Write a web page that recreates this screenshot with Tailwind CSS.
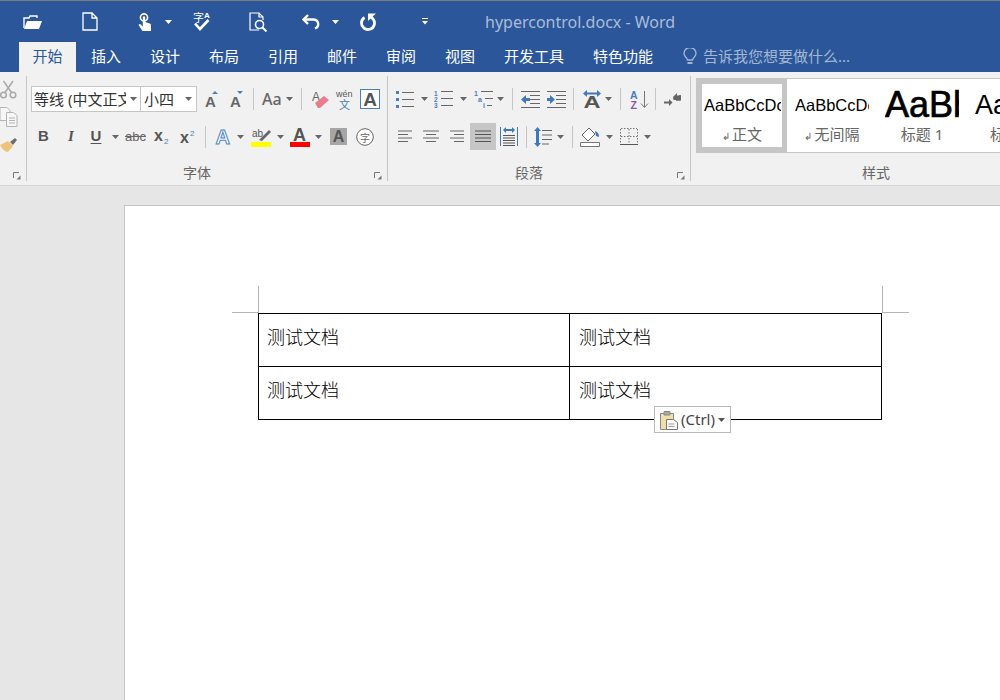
<!DOCTYPE html>
<html lang="zh-CN">

<head>
    <meta charset="UTF-8">
    <script src="https://cdn.jsdelivr.net/npm/@tailwindcss/browser@4"></script>
    <title>hypercontrol.docx - Word</title>
</head>

<body class="w-[1000px] h-[700px] overflow-hidden flex flex-col bg-[#e6e6e6] font-['Noto_Sans','Noto_Sans_CJK_SC',sans-serif]">

    <!-- Title bar -->
    <div class="h-[42px] shrink-0 bg-[#2b579a] border-t border-[#7d7d7d] flex items-center text-white relative">
        <svg class="ml-[23px] shrink-0" width="19" height="16" viewBox="0 0 19 16"><path d="M1 14V4h5l1-2h7v2" fill="none" stroke="#fff" stroke-width="1.400"/><path d="M1 15l3-8h15l-3 8z" fill="#fff"/></svg>
        <svg class="ml-[40px] shrink-0" width="16" height="19" viewBox="0 0 16 19"><path d="M1 1h9l5 5v12H1z M10 1v5h5" fill="none" stroke="#fff" stroke-width="1.300"/></svg>
        <svg class="ml-[40px] shrink-0" width="14" height="18" viewBox="0 0 14 18"><circle cx="6" cy="4.500" r="3.600" fill="none" stroke="#fff" stroke-width="1.600"/><path d="M4.800 4.500a1.200 1.200 0 0 1 2.400 0v4.500l4.500 1.500c1 .4 1.300 1 1.300 2V18H4.500L.8 12.500c-.6-1 .7-2 1.600-1.200L4.800 13.500z" fill="#fff"/></svg>
        <svg class="ml-[13px] shrink-0" width="7" height="4"><path d="M0 0h7L3.500 4z" fill="#fff"/></svg>
        <svg class="ml-[21px] shrink-0 overflow-visible" width="19" height="21" viewBox="0 0 19 21"><text x="0" y="11" font-size="11" font-family="Noto Sans CJK SC" fill="#fff">字</text><text x="11" y="7" font-size="8" font-weight="700" font-family="Liberation Sans" fill="#fff">A</text><path d="M2 12.500l5 5.500 8.500-9" fill="none" stroke="#fff" stroke-width="2.600"/></svg>
        <svg class="ml-[37px] shrink-0" width="19" height="20" viewBox="0 0 19 20"><path d="M10 18H1V1h9l4 4v3 M10 1v4h4" fill="none" stroke="#fff" stroke-width="1.200"/><circle cx="10.500" cy="12.500" r="4" fill="none" stroke="#fff" stroke-width="1.600"/><path d="M13.500 15.500l4 4" stroke="#fff" stroke-width="2"/></svg>
        <svg class="ml-[34px] shrink-0" width="19" height="16" viewBox="0 0 19 16"><path d="M6 1L1.500 5.500 6 10" fill="none" stroke="#fff" stroke-width="2.400"/><path d="M2 5.500h9c6 0 7 7 2 9" fill="none" stroke="#fff" stroke-width="2.400"/></svg>
        <svg class="ml-[11px] shrink-0" width="7" height="4"><path d="M0 0h7L3.500 4z" fill="#fff"/></svg>
        <svg class="ml-[20px] shrink-0" width="18" height="18" viewBox="0 0 18 18"><path d="M5.500 4.500A6.500 6.500 0 1 0 9 3.500" fill="none" stroke="#fff" stroke-width="2.800"/><path d="M9 .5h8L9 8z" fill="#fff"/></svg>
        <svg class="ml-[45px] shrink-0" width="6" height="7" viewBox="0 0 6 7"><path d="M0 .5h6" stroke="#fff"/><path d="M0 3h6L3 6.500z" fill="#fff"/></svg>
        <span class="ml-[57px] text-[16px] text-[#a9bcd8] whitespace-nowrap">hypercontrol.docx - Word</span>
    </div>

    <!-- Tabs -->
    <div class="h-[30px] shrink-0 bg-[#2b579a] flex items-stretch pl-[19px] gap-[3px] text-[15px] text-white whitespace-nowrap">
        <div class="w-[57px] bg-[#f1f1f1] text-[#2b579a] flex items-center justify-center pb-[2px]">开始</div>
        <div class="w-[56px] -ml-px flex items-center justify-center pb-[2px]">插入</div>
        <div class="w-[56px] flex items-center justify-center pb-[2px]">设计</div>
        <div class="w-[56px] flex items-center justify-center pb-[2px]">布局</div>
        <div class="w-[56px] flex items-center justify-center pb-[2px]">引用</div>
        <div class="w-[56px] flex items-center justify-center pb-[2px]">邮件</div>
        <div class="w-[56px] flex items-center justify-center pb-[2px]">审阅</div>
        <div class="w-[56px] flex items-center justify-center pb-[2px]">视图</div>
        <div class="w-[86px] flex items-center justify-center pb-[2px]">开发工具</div>
        <div class="w-[86px] flex items-center justify-center pb-[2px]">特色功能</div>
        <div class="flex items-center ml-[14px] text-[#a3b7d3] pb-[1px]">
            <svg width="14" height="18" viewBox="0 0 14 18" class="shrink-0"><path d="M4.500 12C4 9.500 1 8.500 1 5.500a6 6 0 0 1 12 0c0 3-3 4-3.500 6.500z" fill="none" stroke="#a3b7d3" stroke-width="1.300"/><path d="M4.500 14h5v2h-5z" fill="#a3b7d3"/></svg>
            <span class="ml-[6px]">告诉我您想要做什么...</span>
        </div>
    </div>

    <!-- Ribbon -->
    <div class="h-[114px] shrink-0 bg-[#f1f1f1] border-b border-[#d4d4d4] flex">

        <!-- Clipboard -->
        <div class="w-[26px] shrink-0 flex flex-col relative overflow-hidden">
            <svg class="mt-[8px]" width="17" height="19" viewBox="0 0 17 19"><g fill="none" stroke="#aaa" stroke-width="1.500"><circle cx="3.500" cy="15" r="2.800"/><circle cx="13" cy="15" r="2.800"/><path d="M5 12.500L13 1M11.500 12.500L3.500 1"/></g></svg>
            <svg class="mt-[8px]" width="18" height="20" viewBox="0 0 18 20"><g fill="#f6f6f6" stroke="#b4b4b4"><path d="M0 .5h7l3 3v10H0z"/><path d="M6.500 5.500h7l3.500 3v11H6.500z"/></g><path d="M9 11h6M9 13.500h6M9 16h6" stroke="#b4b4b4"/></svg>
            <svg class="mt-[10px]" width="18" height="16" viewBox="0 0 18 16"><path d="M10 5l5-4 2 2-4 5z" fill="#6e6e6e"/><path d="M0 8l8-4 5 5-5 6C5 15 2 12 0 8z" fill="#efc27c"/></svg>
            <svg class="absolute left-[13px] top-[100px]" width="8" height="8" viewBox="0 0 8 8"><path d="M.5 6V.5H6" fill="none" stroke="#777"/><path d="M7.500 7.500H3.500l4-4z" fill="#777"/></svg>
        </div>
        <div class="w-px my-[4px] bg-[#c6c6c6] shrink-0"></div>

        <!-- Font group -->
        <div class="w-[360px] shrink-0 flex flex-col relative pt-[14px]">
            <div class="h-[26px] flex items-center">
                <div class="ml-[4px] w-[110px] h-[26px] bg-white border border-[#c6c6c6] flex items-center text-[15px] text-[#333] shrink-0">
                    <span class="w-[92px] ml-[2px] overflow-hidden whitespace-nowrap">等线 (中文正文</span>
                    <svg class="ml-[4px]" width="7" height="4"><path d="M0 0h7L3.500 4z" fill="#666"/></svg>
                </div>
                <div class="w-[56px] h-[26px] bg-white border border-l-0 border-[#c6c6c6] flex items-center text-[15px] text-[#333] shrink-0">
                    <span class="w-[40px] ml-[3px] whitespace-nowrap">小四</span>
                    <svg class="ml-[1px]" width="7" height="4"><path d="M0 0h7L3.500 4z" fill="#666"/></svg>
                </div>
                <svg class="ml-[8px] shrink-0 overflow-visible" width="14" height="16" viewBox="0 0 14 16"><text x="0" y="15.500" font-size="15" font-family="Liberation Sans" font-weight="700" fill="#666">A</text><path d="M7 3l3-3 3 3z" fill="#4a7dbb"/></svg>
                <svg class="ml-[11px] shrink-0 overflow-visible" width="14" height="16" viewBox="0 0 14 16"><text x="0" y="15.500" font-size="15" font-family="Liberation Sans" font-weight="700" fill="#666">A</text><path d="M7 0h6l-3 3z" fill="#4a7dbb"/></svg>
                <div class="ml-[9px] w-px h-[22px] bg-[#c6c6c6] shrink-0"></div>
                <span class="ml-[8px] text-[16px] font-medium text-[#666] leading-none w-[20px] shrink-0 whitespace-nowrap">Aa</span>
                <svg class="ml-[4px] shrink-0" width="7" height="4"><path d="M0 0h7L3.500 4z" fill="#666"/></svg>
                <div class="ml-[8px] w-px h-[22px] bg-[#c6c6c6] shrink-0"></div>
                <svg class="ml-[10px] shrink-0 overflow-visible" width="18" height="20" viewBox="0 0 18 20"><text x="0" y="12" font-size="12" font-family="Liberation Sans" fill="#666">A</text><path d="M3 14l9-7 5 4-9 8H6z" fill="#e97d8e"/></svg>
                <svg class="ml-[6px] shrink-0 overflow-visible" width="17" height="21" viewBox="0 0 17 21"><text x="0" y="8" font-size="9" font-family="Liberation Sans" fill="#555">wén</text><text x="3" y="20" font-size="11" font-family="Noto Sans CJK SC" fill="#4a7dbb">文</text></svg>
                <div class="ml-[7px] w-[20px] h-[20px] border border-[#4a7dbb] bg-white flex items-center justify-center text-[19px] font-bold leading-none text-[#555] font-['Liberation_Sans'] shrink-0">A</div>
            </div>
            <div class="h-[27px] mt-[11px] flex items-center text-[#555]">
                <span class="ml-[11px] w-[10px] text-[15px] font-bold font-['Liberation_Sans'] text-center shrink-0">B</span>
                <span class="ml-[18px] w-[10px] text-[15px] font-bold italic font-['Liberation_Serif'] text-center shrink-0">I</span>
                <span class="ml-[14px] w-[12px] text-[15px] font-bold font-['Liberation_Sans'] text-center underline underline-offset-2 shrink-0">U</span>
                <svg class="ml-[10px] shrink-0" width="7" height="4"><path d="M0 0h7L3.500 4z" fill="#666"/></svg>
                <span class="ml-[6px] w-[21px] text-[13px] font-['Liberation_Sans'] text-[#666] line-through text-center shrink-0">abc</span>
                <svg class="ml-[8px] shrink-0 overflow-visible" width="17" height="16" viewBox="0 0 17 16"><text x="0" y="12" font-size="16" font-weight="700" font-family="Liberation Sans" fill="#555">x</text><text x="10" y="15" font-size="8" font-family="Liberation Sans" fill="#4a7dbb">2</text></svg>
                <svg class="ml-[9px] shrink-0 overflow-visible" width="17" height="16" viewBox="0 0 17 16"><text x="0" y="14" font-size="16" font-weight="700" font-family="Liberation Sans" fill="#555">x</text><text x="10" y="7" font-size="8" font-family="Liberation Sans" fill="#4a7dbb">2</text></svg>
                <div class="ml-[8px] w-px h-[22px] bg-[#c6c6c6] shrink-0"></div>
                <svg class="ml-[9px] shrink-0 overflow-visible" width="17" height="18" viewBox="0 0 17 18"><text x="0.500" y="16" font-size="20" font-weight="700" font-family="Liberation Sans" fill="#fff" stroke="#4a86c8" stroke-width="1">A</text></svg>
                <svg class="ml-[5px] shrink-0" width="7" height="4"><path d="M0 0h7L3.500 4z" fill="#666"/></svg>
                <svg class="ml-[7px] shrink-0 overflow-visible" width="21" height="20" viewBox="0 0 21 20"><text x="1" y="10" font-size="10" font-family="Liberation Sans" fill="#555">ab</text><path d="M8 13L18 3l2 2-9 9z" fill="#666"/><path d="M0 15h20v5H0z" fill="#ff0"/></svg>
                <svg class="ml-[5px] shrink-0" width="7" height="4"><path d="M0 0h7L3.500 4z" fill="#666"/></svg>
                <svg class="ml-[6px] shrink-0 overflow-visible" width="20" height="20" viewBox="0 0 20 20"><text x="3" y="14" font-size="18" font-family="Liberation Sans" font-weight="700" fill="#555">A</text><path d="M0 15h20v5H0z" fill="#f00"/></svg>
                <svg class="ml-[5px] shrink-0" width="7" height="4"><path d="M0 0h7L3.500 4z" fill="#666"/></svg>
                <div class="ml-[8px] w-[17px] h-[17px] bg-[#a6a6a6] flex items-center justify-center text-[16px] font-bold leading-none text-[#555] font-['Liberation_Sans'] shrink-0">A</div>
                <svg class="ml-[9px] shrink-0 overflow-visible" width="18" height="18" viewBox="0 0 18 18"><circle cx="9" cy="9" r="8.300" fill="#fff" stroke="#666" stroke-width="1"/><text x="4" y="13.500" font-size="10" font-family="Noto Sans CJK SC" fill="#666">字</text></svg>
            </div>
            <div class="mt-[13px] h-[20px] pr-[20px] text-center text-[14px] leading-[20px] text-[#666]">字体</div>
            <svg class="absolute left-[347px] top-[100px]" width="8" height="8" viewBox="0 0 8 8"><path d="M.5 6V.5H6" fill="none" stroke="#777"/><path d="M7.500 7.500H3.500l4-4z" fill="#777"/></svg>
        </div>
        <div class="w-px my-[4px] bg-[#c6c6c6] shrink-0"></div>

        <!-- Paragraph group -->
        <div class="w-[302px] shrink-0 flex flex-col relative pt-[14px]">
            <div class="h-[26px] flex items-center">
                <svg class="ml-[7px] shrink-0" width="19" height="17" viewBox="0 0 19 17"><path d="M1 0h3v3H1zM1 7h3v3H1zM1 14h3v3H1z" fill="#4a7dbb"/><path d="M7 1.500h12M7 8.500h12M7 15.500h12" stroke="#666"/></svg>
                <svg class="ml-[7px] shrink-0" width="7" height="4"><path d="M0 0h7L3.500 4z" fill="#666"/></svg>
                <svg class="ml-[6px] shrink-0 overflow-visible" width="19" height="18" viewBox="0 0 19 18"><g font-size="6.500" font-weight="700" font-family="Liberation Sans" fill="#4a7dbb"><text x="0" y="5.500">1</text><text x="0" y="12">2</text><text x="0" y="18">3</text></g><path d="M7 1.500h12M7 8.500h12M7 15.500h12" stroke="#666"/></svg>
                <svg class="ml-[7px] shrink-0" width="7" height="4"><path d="M0 0h7L3.500 4z" fill="#666"/></svg>
                <svg class="ml-[7px] shrink-0 overflow-visible" width="19" height="18" viewBox="0 0 19 18"><g font-size="7" font-weight="700" font-family="Liberation Sans" fill="#4a7dbb"><text x="0" y="6">1</text><text x="4" y="12">a</text><text x="9" y="18">i</text></g><path d="M7 1.500h12M11 8.500h8M13 15.500h5" stroke="#666"/></svg>
                <svg class="ml-[4px] shrink-0" width="7" height="4"><path d="M0 0h7L3.500 4z" fill="#666"/></svg>
                <div class="ml-[8px] w-px h-[22px] bg-[#c6c6c6] shrink-0"></div>
                <svg class="ml-[8px] shrink-0" width="19" height="17" viewBox="0 0 19 17"><path d="M0 .5h19M9 4.500h10M9 8.500h10M9 12.500h10M0 16.500h19" stroke="#666"/><path d="M0 8.500L5 4v3h4v3H5v3z" fill="#3f78bd"/></svg>
                <svg class="ml-[7px] shrink-0" width="19" height="17" viewBox="0 0 19 17"><path d="M0 .5h19M9 4.500h10M9 8.500h10M9 12.500h10M0 16.500h19" stroke="#666"/><path d="M8 8.500L3 4v3H0v3h3v3z" fill="#3f78bd"/></svg>
                <div class="ml-[7px] w-px h-[22px] bg-[#c6c6c6] shrink-0"></div>
                <svg class="ml-[8px] shrink-0 overflow-visible" width="20" height="18" viewBox="0 0 20 18"><path d="M1 3.500L5 0v2.500h10V0l4 3.500L15 7V4.500H5V7z" fill="#3f78bd"/><text x="1.500" y="18" font-size="16" font-weight="700" font-family="Liberation Sans" fill="#555" textLength="17" lengthAdjust="spacingAndGlyphs">A</text></svg>
                <svg class="ml-[3px] shrink-0" width="7" height="4"><path d="M0 0h7L3.500 4z" fill="#666"/></svg>
                <div class="ml-[8px] w-px h-[22px] bg-[#c6c6c6] shrink-0"></div>
                <svg class="ml-[9px] shrink-0 overflow-visible" width="19" height="19" viewBox="0 0 19 19"><text x="0" y="9" font-size="10.500" font-weight="700" font-family="Liberation Sans" fill="#4a7dbb">A</text><text x="0.500" y="19" font-size="10.500" font-weight="700" font-family="Liberation Sans" fill="#8a56a8">Z</text><path d="M14.500 1v16M11 13.500l3.500 4 3.500-4" fill="none" stroke="#777"/></svg>
                <div class="ml-[6px] w-px h-[22px] bg-[#c6c6c6] shrink-0"></div>
                <svg class="ml-[8px] shrink-0" width="17" height="15" viewBox="0 0 17 15"><path d="M9 5l4-4v2.500h4V8H9.500" fill="#666"/><path d="M16 3v5H12" fill="none" stroke="#666" stroke-width="1.500"/><path d="M0 9.500h5V7l3.500 3.500L5 14v-2.500H0z" fill="#666"/></svg>
            </div>
            <div class="h-[27px] mt-[11px] flex items-center">
                <svg class="ml-[10px] shrink-0" width="14" height="13" viewBox="0 0 14 13"><path d="M0 1h14M0 4.500h10M0 8h14M0 11.500h10" stroke="#666"/></svg>
                <svg class="ml-[11px] shrink-0" width="16" height="13" viewBox="0 0 16 13"><path d="M0 1h16M3 4.500h10M0 8h16M3 11.500h10" stroke="#666"/></svg>
                <svg class="ml-[11px] shrink-0" width="14" height="13" viewBox="0 0 14 13"><path d="M0 1h14M4 4.500h10M0 8h14M4 11.500h10" stroke="#666"/></svg>
                <div class="ml-[6px] w-[26px] h-[27px] bg-[#c6c6c6] flex items-center justify-center shrink-0">
                    <svg width="16" height="13" viewBox="0 0 16 13"><path d="M0 1h16M0 4.500h16M0 8h16M0 11.500h16" stroke="#555"/></svg>
                </div>
                <svg class="ml-[4px] shrink-0" width="18" height="20" viewBox="0 0 18 20"><path d="M.5 0v19M17.500 0v19" stroke="#3f78bd"/><path d="M3 3l3-3v2h6V0l3 3-3 3V4H6v2z" fill="#3f78bd"/><path d="M3 8.500h12M3 11h12M3 13.500h12M3 16h12M3 18.500h12" stroke="#555"/></svg>
                <div class="ml-[8px] w-px h-[22px] bg-[#c6c6c6] shrink-0"></div>
                <svg class="ml-[7px] shrink-0" width="18" height="20" viewBox="0 0 18 20"><path d="M3.500 0l3.500 4H5v12h2l-3.500 4L0 16h2V4H0z" fill="#3f78bd"/><path d="M8 3.500h10M8 8h10M8 12.500h10M8 17h7" stroke="#666"/></svg>
                <svg class="ml-[5px] shrink-0" width="7" height="4"><path d="M0 0h7L3.500 4z" fill="#666"/></svg>
                <div class="ml-[8px] w-px h-[22px] bg-[#c6c6c6] shrink-0"></div>
                <svg class="ml-[7px] shrink-0" width="20" height="20" viewBox="0 0 20 20"><path d="M2 8l7-7 6 6-7 7z" fill="#fff" stroke="#666"/><path d="M15 4c3 1 4 3 4 6l-3-1z" fill="#3f78bd"/><path d="M.5 15.500h19v4H.5z" fill="#fff" stroke="#777"/></svg>
                <svg class="ml-[6px] shrink-0" width="7" height="4"><path d="M0 0h7L3.500 4z" fill="#666"/></svg>
                <svg class="ml-[7px] shrink-0" width="18" height="18" viewBox="0 0 18 18"><path d="M.5 1v14M9 1v14M17.500 1v14M1 .5h16M1 8.500h16" stroke="#777" stroke-dasharray="1.500 1.500" fill="none"/><path d="M0 16.500h18" stroke="#555"/></svg>
                <svg class="ml-[6px] shrink-0" width="7" height="4"><path d="M0 0h7L3.500 4z" fill="#666"/></svg>
            </div>
            <div class="mt-[13px] h-[20px] pr-[20px] text-center text-[14px] leading-[20px] text-[#666]">段落</div>
            <svg class="absolute left-[289px] top-[100px]" width="8" height="8" viewBox="0 0 8 8"><path d="M.5 6V.5H6" fill="none" stroke="#777"/><path d="M7.500 7.500H3.500l4-4z" fill="#777"/></svg>
        </div>
        <div class="w-px my-[4px] bg-[#c6c6c6] shrink-0"></div>

        <!-- Styles group -->
        <div class="flex-1 min-w-0 flex flex-col pl-[5px] pt-[6px] overflow-hidden">
            <div class="h-[75px] w-[320px] shrink-0 bg-white border border-r-0 border-[#c6c6c6] flex">
                <div class="w-[90px] h-[73px] shrink-0 border-[5px] border-[#c6c6c6] flex flex-col items-center text-[#666]">
                    <div class="w-[78px] h-[36px] mt-[3px] overflow-hidden whitespace-nowrap text-[16.500px] leading-[36px] text-black font-['Liberation_Sans'] pl-[1px]">AaBbCcDc</div>
                    <div class="text-[15px] leading-[20px] mt-[1px] whitespace-nowrap"><span class="text-[10px] mr-[2px]">↲</span>正文</div>
                </div>
                <div class="w-[74px] ml-[8px] shrink-0 flex flex-col items-center text-[#666]">
                    <div class="w-[74px] h-[36px] mt-[8px] overflow-hidden whitespace-nowrap text-[16.500px] leading-[36px] text-black font-['Liberation_Sans']">AaBbCcDc</div>
                    <div class="text-[15px] leading-[20px] mt-[1px] whitespace-nowrap"><span class="text-[10px] mr-[2px]">↲</span>无间隔</div>
                </div>
                <div class="w-[74px] ml-[16px] shrink-0 flex flex-col items-center text-[#666]">
                    <div class="w-[74px] h-[36px] mt-[8px] overflow-hidden whitespace-nowrap text-[36px] leading-[36px] text-black font-['Liberation_Sans'] [-webkit-text-stroke:0.7px_black]">AaBb</div>
                    <div class="text-[15px] leading-[20px] mt-[1px] whitespace-nowrap">标题 1</div>
                </div>
                <div class="w-[60px] ml-[16px] shrink-0 flex flex-col text-[#666]">
                    <div class="h-[36px] mt-[8px] overflow-hidden whitespace-nowrap text-[27px] leading-[36px] text-black font-['Liberation_Sans']">AaBb</div>
                    <div class="text-[15px] leading-[20px] mt-[1px] ml-[15px] whitespace-nowrap">标题 2</div>
                </div>
            </div>
            <div class="mt-[10px] h-[20px] pl-[166px] text-[14px] leading-[20px] text-[#666]">样式</div>
        </div>
    </div>

    <!-- Document area -->
    <div class="flex-1 min-h-0 pl-[124px] pt-[19px] overflow-hidden">
        <div class="w-[1000px] h-[600px] bg-white border-l border-t border-[#c6c6c6] pl-[133px] pt-[107px]">
            <div class="relative w-[624px]">
                <!-- crop marks -->
                <div class="absolute left-0 top-[-27px] w-px h-[27px] bg-[#b4b4b4]"></div>
                <div class="absolute left-[-26px] top-[-1px] w-[26px] h-px bg-[#b4b4b4]"></div>
                <div class="absolute left-[624px] top-[-27px] w-px h-[27px] bg-[#b4b4b4]"></div>
                <div class="absolute left-[624px] top-[-1px] w-[27px] h-px bg-[#b4b4b4]"></div>

                <table class="w-[624px] border-collapse table-fixed text-[18px] font-light text-black">
                    <tr class="h-[53px]">
                        <td class="w-[311px] border border-black pl-[8px] pb-[5px]">测试文档</td>
                        <td class="border border-black pl-[9px] pb-[5px]">测试文档</td>
                    </tr>
                    <tr class="h-[53px]">
                        <td class="border border-black pl-[8px] pb-[5px]">测试文档</td>
                        <td class="border border-black pl-[9px] pb-[5px]">测试文档</td>
                    </tr>
                </table>

                <!-- paste options -->
                <div class="absolute left-[396px] top-[93px] w-[77px] h-[27px] bg-white border border-[#b9b9b9] flex items-center">
                    <svg class="ml-[5px] shrink-0" width="18" height="20" viewBox="0 0 18 20"><path d="M.5 3.500h13v16H.5z" fill="#f0dfa8" stroke="#888"/><path d="M4 1.500h6V5H4z" fill="#aaa" stroke="#888"/><path d="M6.500 9.500h7l4 3v7h-11z" fill="#fff" stroke="#777"/><path d="M8.500 14h6M8.500 16.500h6" stroke="#999"/></svg>
                    <span class="ml-[3px] text-[15px] text-[#444] whitespace-nowrap">(Ctrl)</span>
                    <svg class="ml-[3px] shrink-0" width="7" height="4"><path d="M0 0h7L3.500 4z" fill="#555"/></svg>
                </div>
            </div>
        </div>
    </div>
</body>

</html>
